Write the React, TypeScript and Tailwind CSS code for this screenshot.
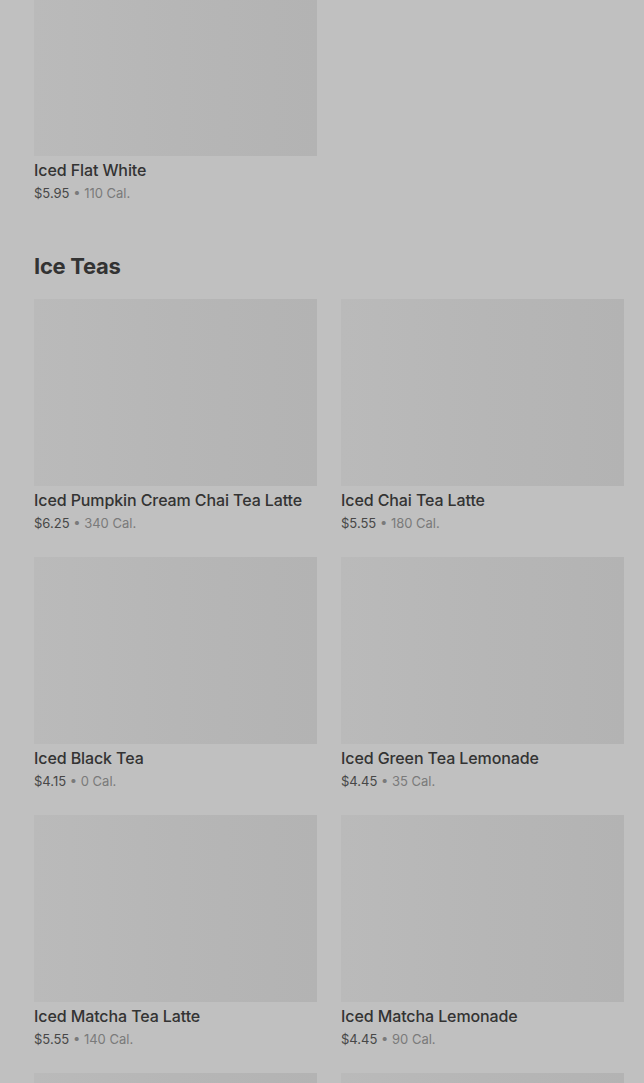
const FONT = { fontFamily: 'Inter, "Noto Sans", sans-serif' }

type Item = { name: string; price: string; cal: string }

const TEAS: Item[] = [
  { name: 'Iced Pumpkin Cream Chai Tea Latte', price: '$6.25', cal: '340 Cal.' },
  { name: 'Iced Chai Tea Latte', price: '$5.55', cal: '180 Cal.' },
  { name: 'Iced Black Tea', price: '$4.15', cal: '0 Cal.' },
  { name: 'Iced Green Tea Lemonade', price: '$4.45', cal: '35 Cal.' },
  { name: 'Iced Matcha Tea Latte', price: '$5.55', cal: '140 Cal.' },
  { name: 'Iced Matcha Lemonade', price: '$4.45', cal: '90 Cal.' },
]

const IMG = 'w-full bg-gradient-to-r from-[#bababa] via-[#b6b6b6] to-[#b3b3b3]'

function Card({ item, imgClass = 'h-[187px]' }: { item: Item; imgClass?: string }) {
  return (
    <div className="flex flex-col">
      <div className={`${imgClass} ${IMG}`} />
      <div className="mt-[2px] text-[16px] leading-6 font-medium text-[#333333] tracking-[-0.1px]">
        {item.name}
      </div>
      <div className="pt-px text-[13px] leading-5 text-[#474747]">
        {item.price}
        <span className="text-[#7a7a7a]"> • {item.cal}</span>
      </div>
    </div>
  )
}

export default function App() {
  return (
    <div className="h-[1083px] overflow-hidden bg-[#c0c0c0]" style={FONT}>
      <div className="pl-[34px] pr-[20px]">
        <div className="grid grid-cols-2 gap-x-6">
          <Card
            item={{ name: 'Iced Flat White', price: '$5.95', cal: '110 Cal.' }}
            imgClass="h-[156px]"
          />
        </div>

        <h2 className="mt-[47px] mb-[17px] text-[22px] leading-8 font-bold text-[#333333] tracking-[-0.3px]">
          Ice Teas
        </h2>

        <div className="grid grid-cols-2 gap-x-6 gap-y-[24px]">
          {TEAS.map((t) => (
            <Card key={t.name} item={t} />
          ))}
          <div className={`h-[187px] ${IMG}`} />
          <div className={`h-[187px] ${IMG}`} />
        </div>
      </div>
    </div>
  )
}
